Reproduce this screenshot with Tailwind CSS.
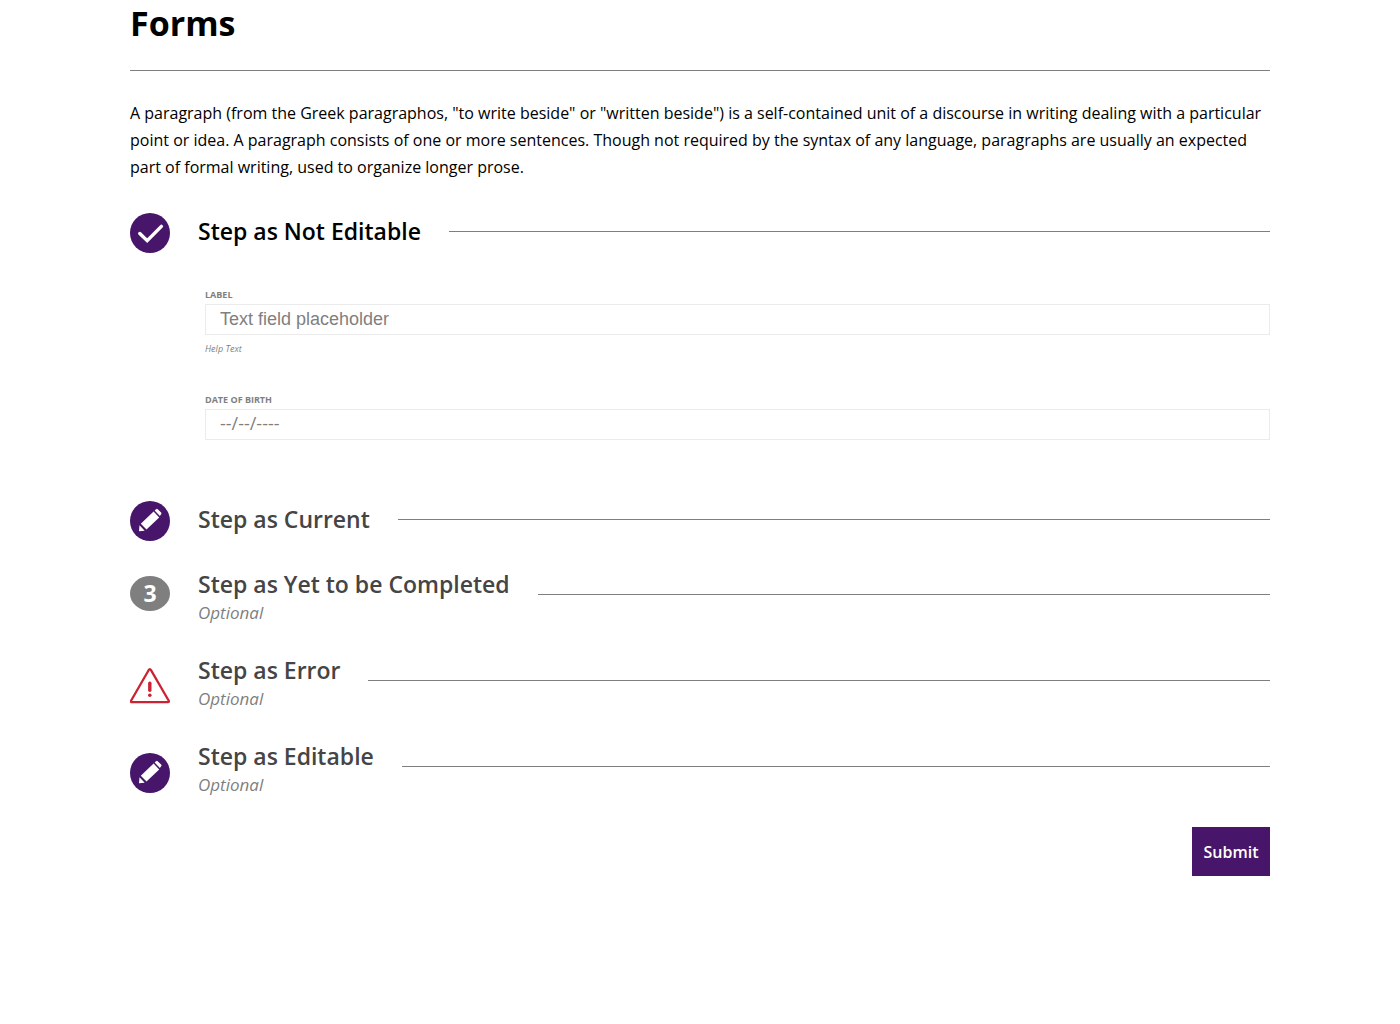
<!DOCTYPE html>
<html lang="en">
<head>
<meta charset="utf-8">
<meta name="viewport" content="width=device-width, initial-scale=1">
<title>Forms</title>
<script src="https://cdn.jsdelivr.net/npm/@tailwindcss/browser@4"></script>
</head>
<body class="bg-white text-black font-['Open_Sans','Noto_Sans',sans-serif]">
<svg class="hidden" aria-hidden="true">
  <symbol id="pencil" viewBox="0 0 40 40">
    <circle cx="20" cy="20" r="20" fill="#47166a"/>
    <path fill="#fff" d="M9 30.200 9.500 24.300l5.200 5.400zM10.800 22.800 23.600 10.600l5.600 5.800L16.500 28.600zM24.600 9.600l1.500-1.400q.8-.7 1.600 0l3.400 3.400q.8.900 0 1.700l-1.200 1.600z"/>
  </symbol>
</svg>
<main class="mx-auto max-w-[1188px] px-6">
  <h1 class="text-[34px] leading-[46px] font-bold">Forms</h1>
  <hr class="mt-6 border-[#7f7f7f]">
  <p class="mt-[29px] text-[16px] leading-[27px]">A paragraph (from the Greek paragraphos, "to write beside" or "written beside") is a self-contained unit of a discourse in writing dealing with a particular point or idea. A paragraph consists of one or more sentences. Though not required by the syntax of any language, paragraphs are usually an expected part of formal writing, used to organize longer prose.</p>

  <form class="mt-8">
    <section>
      <div class="flex h-9 items-center gap-7">
        <svg class="mt-1 size-10 shrink-0" viewBox="0 0 40 40" aria-hidden="true">
          <circle cx="20" cy="20" r="20" fill="#47166a"/>
          <path d="M9.800 20.500l7.400 7.200L31.400 13.400" fill="none" stroke="#fff" stroke-width="3.400" stroke-linecap="round"/>
        </svg>
        <h2 class="text-[23px] leading-9 font-semibold">Step as Not Editable</h2>
        <hr class="grow border-[#7f7f7f]">
      </div>
      <div class="flex flex-col gap-9 pt-9 pl-[75px] text-[#7f7f7f]">
        <div class="flex flex-col">
          <label for="field" class="text-[9px] leading-[19px] font-bold">LABEL</label>
          <input id="field" type="text" placeholder="Text field placeholder" aria-describedby="field-help" class="h-[31px] w-full border border-[#ebebeb] px-[14px] font-['Liberation_Sans',sans-serif] text-lg placeholder:text-[#7f7f7f]">
          <p id="field-help" class="mt-2 text-[9px] leading-[11px] italic">Help Text</p>
        </div>
        <div class="flex flex-col">
          <label for="dob" class="text-[9px] leading-[19px] font-bold">DATE OF BIRTH</label>
          <input id="dob" type="text" placeholder="--/--/----" class="h-[31px] w-full border border-[#ebebeb] px-[14px] pb-[3px] text-lg placeholder:text-[#7f7f7f]">
        </div>
      </div>
    </section>

    <div class="mt-[61px] flex flex-col gap-[30px] text-[#454545]">
      <section class="flex h-9 items-center gap-7">
        <svg class="mt-1 size-10 shrink-0" aria-hidden="true"><use href="#pencil"/></svg>
        <h2 class="text-[23px] leading-9 font-semibold">Step as Current</h2>
        <hr class="grow border-[#7f7f7f]">
      </section>
      <section class="flex h-14 items-center gap-7">
        <span class="mb-1 flex h-[35px] w-10 shrink-0 items-center justify-center rounded-[50%] bg-[#7f7f7f] text-[23px] font-bold text-white">3</span>
        <div>
          <h2 class="text-[23px] leading-9 font-semibold">Step as Yet to be Completed</h2>
          <p class="text-[17px] leading-[22px] text-[#7f7f7f] italic">Optional</p>
        </div>
        <hr class="mb-px grow border-[#7f7f7f]">
      </section>
      <section class="flex h-14 items-center gap-7">
        <svg class="mt-[9px] h-9 w-10 shrink-0" viewBox="0 0 40 36" fill="none" stroke="#cb2333" aria-hidden="true">
          <path d="M18.600 2.200q1.200-2 2.400 0L38.600 32.500q1 1.700-.9 1.700H2.100q-1.900 0-.9-1.700z" stroke-width="2.300" stroke-linejoin="round"/>
          <path d="M19.800 15.200v7" stroke-width="3.400" stroke-linecap="round"/>
          <circle cx="19.800" cy="27.300" r="1.800" fill="#cb2333" stroke="none"/>
        </svg>
        <div>
          <h2 class="text-[23px] leading-9 font-semibold">Step as Error</h2>
          <p class="text-[17px] leading-[22px] text-[#7f7f7f] italic">Optional</p>
        </div>
        <hr class="mb-px grow border-[#7f7f7f]">
      </section>
      <section class="flex h-14 items-center gap-7">
        <svg class="mt-3 size-10 shrink-0" aria-hidden="true"><use href="#pencil"/></svg>
        <div>
          <h2 class="text-[23px] leading-9 font-semibold">Step as Editable</h2>
          <p class="text-[17px] leading-[22px] text-[#7f7f7f] italic">Optional</p>
        </div>
        <hr class="mb-px grow border-[#7f7f7f]">
      </section>
    </div>

    <div class="mt-8 flex justify-end">
      <button type="submit" class="h-[49px] w-[78px] bg-[#47166a] text-[16px] font-semibold text-white">Submit</button>
    </div>
  </form>
</main>
</body>
</html>
